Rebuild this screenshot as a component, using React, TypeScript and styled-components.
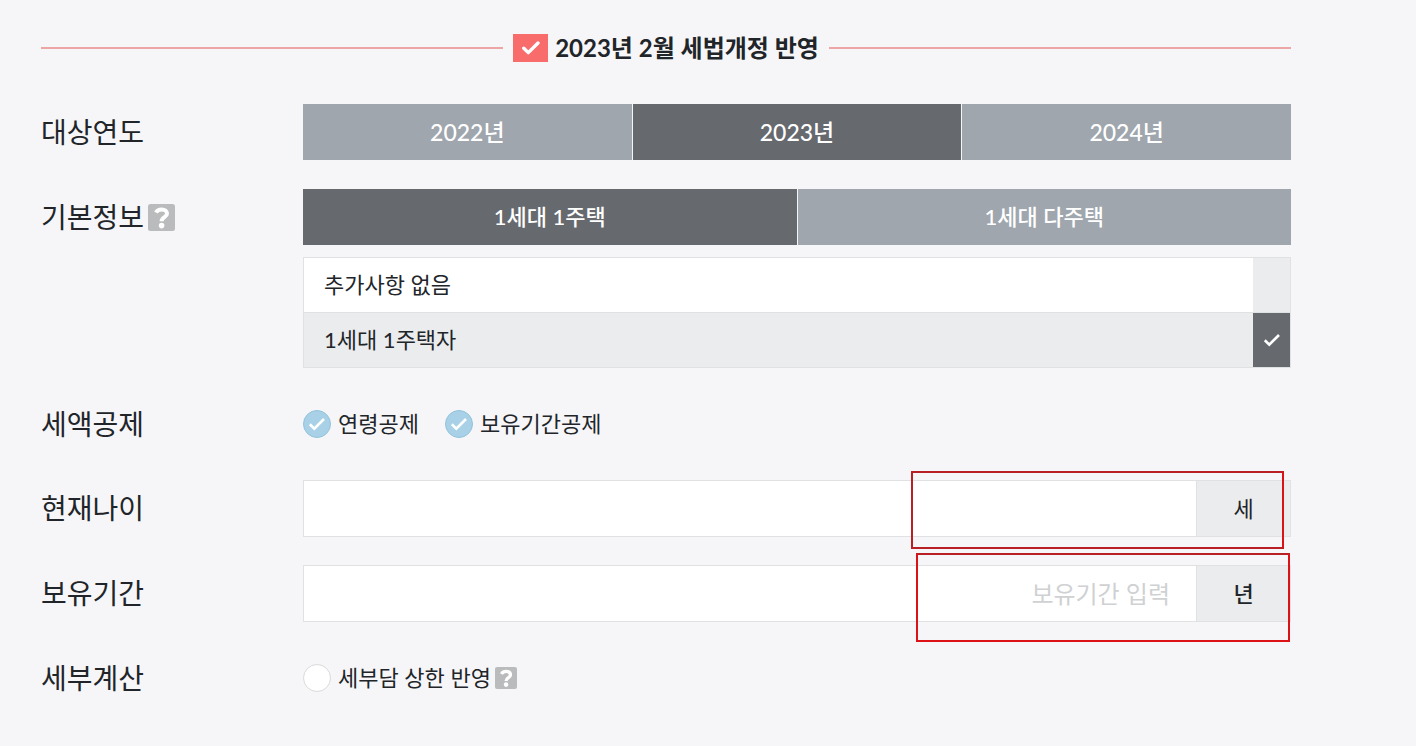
import React, { useState } from "react";
import styled, { createGlobalStyle, css } from "styled-components";

const GlobalStyle = createGlobalStyle`
  *, *::before, *::after { box-sizing: border-box; }
  body {
    margin: 0;
    background: #f6f6f8;
    color: #212529;
    font-family: Lato, "Noto Sans CJK KR", sans-serif;
    font-size: 22px;
    line-height: 28px;
  }
  button, input { font: inherit; color: inherit; }
`;

const Page = styled.main`
  padding: 34px 125px 40px 41px;
`;

const Title = styled.h1`
  display: flex;
  align-items: center;
  margin: 0 0 42px;
  font-size: 24px;
  line-height: 28px;
  font-weight: 700;
  white-space: nowrap;

  &::before,
  &::after {
    content: "";
    flex: 1;
    height: 2px;
    background: #eda5a5;
  }
  &::before { margin-right: 10px; }
  &::after { margin-left: 10px; }
`;

const TitleBadge = styled.span`
  display: flex;
  align-items: center;
  justify-content: center;
  width: 35px;
  height: 28px;
  margin-right: 7px;
  background: #f86c6b;
  color: #fff;
`;

const Form = styled.form`
  display: flex;
  flex-direction: column;
  gap: 28px;
`;

const Row = styled.div`
  display: grid;
  grid-template-columns: 262px minmax(0, 1fr);
`;

const RowLabel = styled.div`
  display: flex;
  align-items: center;
  gap: 4px;
  height: 56px;
  font-size: 28px;
  white-space: nowrap;
`;

const HelpButton = styled.button<{ $size: number }>`
  display: flex;
  width: ${(p) => p.$size}px;
  height: ${(p) => p.$size}px;
  padding: 0;
  border: 0;
  background: none;
  color: #b9bbbc;
  cursor: pointer;
`;

const Segments = styled.div`
  display: flex;
  gap: 1px;
  padding-bottom: 1px;
`;

const Segment = styled.button<{ $active: boolean; $large: boolean }>`
  flex: 1;
  height: 56px;
  padding: 0;
  border: 0;
  color: #fff;
  font-size: ${(p) => (p.$large ? 23 : 22)}px;
  font-weight: 500;
  background: ${(p) => (p.$active ? "#66696e" : "#9fa6ad")};
  cursor: pointer;
`;

const OptionList = styled.div`
  margin-top: 11px;
  border: 1px solid #dfe1e3;
`;

const OptionMark = styled.span<{ $active: boolean }>`
  display: flex;
  align-items: center;
  justify-content: center;
  width: 37px;
  background: ${(p) => (p.$active ? "#66696e" : "#ebecee")};
  color: #fff;
`;

const Option = styled.label<{ $active: boolean }>`
  display: flex;
  height: 54px;
  background: ${(p) => (p.$active ? "#ebecee" : "#fff")};
  cursor: pointer;

  & + & {
    border-top: 1px solid #dfe1e3;
    height: 55px;
  }
`;

const OptionText = styled.span`
  flex: 1;
  align-self: center;
  padding-left: 20px;
`;

const hiddenControl = css`
  appearance: none;
  width: 0;
  height: 0;
  margin: 0;
`;

const OptionRadio = styled.input`
  ${hiddenControl}
`;

const Checks = styled.div`
  display: flex;
  align-items: center;
  gap: 26px;
  height: 56px;
`;

const CheckGroup = styled.div`
  display: flex;
  align-items: center;
  gap: 4px;
`;

const CheckLabel = styled.label`
  display: flex;
  align-items: center;
  cursor: pointer;
`;

const CheckInput = styled.input`
  ${hiddenControl}
`;

const CheckMark = styled.span<{ $checked: boolean }>`
  display: flex;
  align-items: center;
  justify-content: center;
  width: 28px;
  height: 28px;
  margin-right: 7px;
  border: 1px solid ${(p) => (p.$checked ? "#93c3dc" : "#d8dadc")};
  border-radius: 50%;
  background: ${(p) => (p.$checked ? "#a8d1e7" : "#fff")};
  color: #fff;
`;

const Field = styled.div`
  position: relative;
  display: flex;
  height: 57px;
  border: 1px solid #dfe1e3;
  background: #fff;
`;

const FieldInput = styled.input`
  flex: 1;
  min-width: 0;
  padding: 0 26px;
  border: 0;
  outline: 0;
  background: none;
  font-size: 24px;
  text-align: right;

  &::placeholder {
    color: #cfd1d2;
    opacity: 1;
  }
`;

const Unit = styled.span<{ $strong?: boolean }>`
  display: flex;
  align-items: center;
  justify-content: center;
  width: 94px;
  border-left: 1px solid #dfe1e3;
  background: #ebecee;
  font-weight: ${(p) => (p.$strong ? 500 : 400)};
`;

const Highlight = styled.div`
  position: absolute;
  border: 2px solid #dd1217;
  pointer-events: none;
`;

const AgeHighlight = styled(Highlight)`
  top: -10px;
  right: 6px;
  width: 373px;
  height: 78px;
  border-color: #b82025 #dd1217 #b82025 #b82025;
`;

const HoldingHighlight = styled(Highlight)`
  top: -13px;
  right: 0;
  width: 374px;
  height: 89px;
  border-top-color: #b82025;
`;

function Check({ width, stroke, round }: { width: number; stroke: number; round?: boolean }) {
  return (
    <svg width={width} height={width} viewBox="0 0 18 18" fill="none" aria-hidden="true">
      <path
        d="M1.8 9.2L6.3 13.6L16 4"
        stroke="currentColor"
        strokeWidth={stroke}
        strokeLinecap={round ? "round" : "butt"}
        strokeLinejoin={round ? "round" : "miter"}
      />
    </svg>
  );
}

function Help({ size, label }: { size: number; label: string }) {
  return (
    <HelpButton type="button" $size={size} aria-label={label}>
      <svg width={size} height={size} viewBox="0 0 27 27" aria-hidden="true">
        <rect width="27" height="27" rx="2.5" fill="currentColor" />
        <path
          d="M7.9 8.6C9.2 6.4 11.2 5.5 13.6 5.5C16.8 5.5 19 7.1 19 9.7C19 13.3 13.6 12.9 13.6 17.2"
          fill="none"
          stroke="#fff"
          strokeWidth="4"
        />
        <circle cx="13.6" cy="21.6" r="2.8" fill="#fff" />
      </svg>
    </HelpButton>
  );
}

function CheckBox({ label, initial }: { label: string; initial: boolean }) {
  const [checked, setChecked] = useState(initial);
  return (
    <CheckLabel>
      <CheckInput type="checkbox" checked={checked} onChange={(e) => setChecked(e.target.checked)} />
      <CheckMark $checked={checked}>{checked && <Check width={18} stroke={2.6} />}</CheckMark>
      {label}
    </CheckLabel>
  );
}

interface SegmentGroupProps {
  items: string[];
  initial: string;
  label: string;
  large?: boolean;
}

function SegmentGroup({ items, initial, label, large = false }: SegmentGroupProps) {
  const [active, setActive] = useState(initial);
  return (
    <Segments role="group" aria-label={label}>
      {items.map((item) => (
        <Segment
          key={item}
          type="button"
          $active={item === active}
          $large={large}
          aria-pressed={item === active}
          onClick={() => setActive(item)}
        >
          {item}
        </Segment>
      ))}
    </Segments>
  );
}

const EXTRA_OPTIONS = ["추가사항 없음", "1세대 1주택자"];

export default function App() {
  const [extra, setExtra] = useState(EXTRA_OPTIONS[1]);

  return (
    <Page>
      <GlobalStyle />
      <Title>
        <TitleBadge>
          <Check width={18} stroke={3.4} round />
        </TitleBadge>
        2023년 2월 세법개정 반영
      </Title>
      <Form>
        <Row>
          <RowLabel>대상연도</RowLabel>
          <SegmentGroup label="대상연도" items={["2022년", "2023년", "2024년"]} initial="2023년" large />
        </Row>
        <Row>
          <RowLabel>
            기본정보
            <Help size={27} label="기본정보 도움말" />
          </RowLabel>
          <div>
            <SegmentGroup label="기본정보" items={["1세대 1주택", "1세대 다주택"]} initial="1세대 1주택" />
            <OptionList role="radiogroup" aria-label="추가사항">
              {EXTRA_OPTIONS.map((item) => (
                <Option key={item} $active={item === extra}>
                  <OptionRadio
                    type="radio"
                    name="extra"
                    checked={item === extra}
                    onChange={() => setExtra(item)}
                  />
                  <OptionText>{item}</OptionText>
                  <OptionMark $active={item === extra}>
                    {item === extra && <Check width={18} stroke={2.6} />}
                  </OptionMark>
                </Option>
              ))}
            </OptionList>
          </div>
        </Row>
        <Row>
          <RowLabel>세액공제</RowLabel>
          <Checks>
            <CheckBox label="연령공제" initial />
            <CheckBox label="보유기간공제" initial />
          </Checks>
        </Row>
        <Row>
          <RowLabel as="label" htmlFor="age">현재나이</RowLabel>
          <Field>
            <FieldInput id="age" type="text" inputMode="numeric" />
            <Unit>세</Unit>
            <AgeHighlight />
          </Field>
        </Row>
        <Row>
          <RowLabel as="label" htmlFor="holding">보유기간</RowLabel>
          <Field>
            <FieldInput id="holding" type="text" inputMode="numeric" placeholder="보유기간 입력" />
            <Unit $strong>년</Unit>
            <HoldingHighlight />
          </Field>
        </Row>
        <Row>
          <RowLabel>세부계산</RowLabel>
          <Checks>
            <CheckGroup>
              <CheckBox label="세부담 상한 반영" initial={false} />
              <Help size={22} label="세부담 상한 도움말" />
            </CheckGroup>
          </Checks>
        </Row>
      </Form>
    </Page>
  );
}
